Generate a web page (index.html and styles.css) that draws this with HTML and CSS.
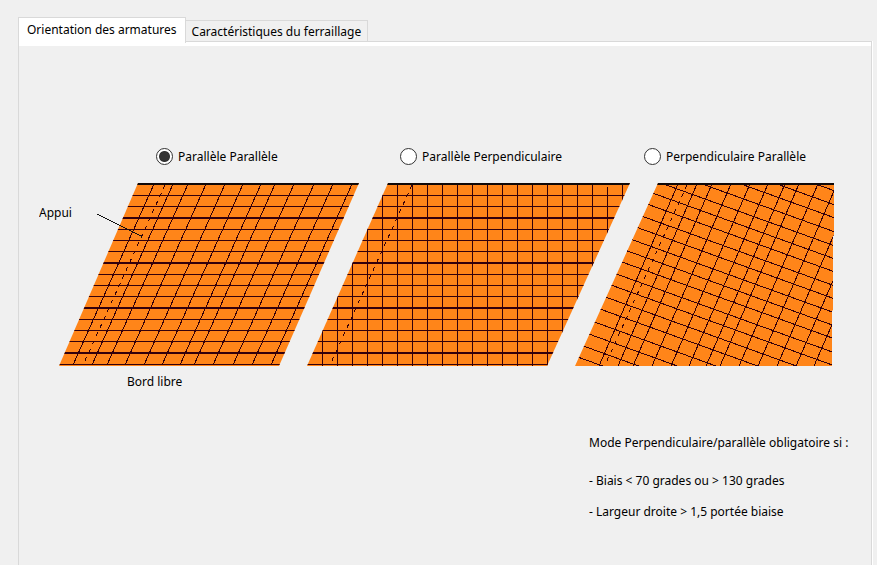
FILE: index.html
```html
<!DOCTYPE html>
<html lang="fr">
<head>
<meta charset="utf-8">
<title>Orientation des armatures</title>
<link rel="stylesheet" href="styles.css">
</head>
<body>
<main class="dialog">
  <div class="tabs" role="tablist">
    <button class="tab tab-active" type="button" role="tab" aria-selected="true">Orientation des armatures</button>
    <button class="tab" type="button" role="tab" aria-selected="false">Caractéristiques du ferraillage</button>
  </div>
  <section class="panel" role="tabpanel">
    <div class="modes">
      <label class="mode"><input type="radio" name="mode" checked>Parallèle Parallèle</label>
      <label class="mode"><input type="radio" name="mode">Parallèle Perpendiculaire</label>
      <label class="mode"><input type="radio" name="mode">Perpendiculaire Parallèle</label>
    </div>
    <svg class="slabs" width="796" height="210" viewBox="0 0 796 210">
      <defs>
        <clipPath id="slab1"><path d="M99 0H320L240 183H20Z"/></clipPath>
        <clipPath id="slab2"><path d="M349 0H591L508 183H268Z"/></clipPath>
        <clipPath id="slab3"><path d="M619 0H795V52L794 53V127L793 128V183H536Z"/></clipPath>
        <g id="rows">
          <path class="bar" d="M0 12.500H600M0 23.500H600M0 46.500H600M0 57.500H600M0 68.500H600M0 91.500H600M0 102.500H600M0 113.500H600M0 136.500H600M0 147.500H600M0 158.500H600M0 181.500H600"/>
          <path class="bar bar-thick" d="M0 35H600M0 80H600M0 125H600M0 170H600"/>
        </g>
      </defs>

      <g clip-path="url(#slab1)">
        <rect class="concrete" width="330" height="183"/>
        <use href="#rows"/>
        <path class="bar" d="M115 1l-81 181M134 1l-81 181M149 1l-81 181M167 1l-81 181M186 1l-81 181M204 1l-81 181M222 1l-81 181M236 1l-81 181M255 1l-81 181M275 1l-81 181M294 1l-81 181M313 1l-81 181"/>
        <path class="support" d="M126 2L44 182"/>
        <path class="edge" d="M90 1H330"/>
      </g>

      <g clip-path="url(#slab2)">
        <rect class="concrete" x="260" width="340" height="183"/>
        <use href="#rows"/>
        <path class="bar" d="M283.500 2V183M298.500 2V183M313.500 2V183M328.500 2V183M343.500 2V183M358.500 2V183M373.500 2V183M388.500 2V183M403.500 2V183M418.500 2V183M433.500 2V183M448.500 2V183M463.500 2V183M478.500 2V183M493.500 2V183M508.500 2V183M523.500 2V183M538.500 2V183M553.500 2V183M568.500 4V183M583.500 2V183"/>
        <path class="support" d="M373 2L291 182"/>
        <path class="edge" d="M340 1H600"/>
      </g>

      <g clip-path="url(#slab3)">
        <rect class="concrete" x="530" width="266" height="183"/>
        <path class="bar" d="M639 1l-79 182M658 1l-79 182M673 1l-79 182M692 1l-79 182M711 1l-79 182M729 1l-79 182M746 1l-79 182M760 1l-79 182M779 1l-79 182M798 1l-79 182M817 1l-79 182M836 1l-79 182M854 1l-79 182"/>
        <path class="bar" d="M536 -86l260 94M536 -72l260 94M536 -59l260 94M536 -45l260 94M536 -31l260 94M536 -18l260 94M536 -5l260 94M536 9l260 94M536 22l260 94M536 36l260 94M536 49l260 94M536 62l260 94M536 76l260 94M536 89l260 94M536 103l260 94M536 117l260 94M536 132l260 94M536 146l260 94M536 160l260 94M536 173l260 94"/>
        <path class="support" d="M648 2L566 182"/>
        <path class="edge" d="M610 1H796"/>
      </g>

      <path class="leader" d="M58 31L102 53V55"/>
      <text x="0" y="34">Appui</text>
      <text x="88" y="203">Bord libre</text>
    </svg>
    <div class="notes">
      <p>Mode Perpendiculaire/parallèle obligatoire si :</p>
      <ul>
        <li>- Biais &lt; 70 grades ou &gt; 130 grades</li>
        <li>- Largeur droite &gt; 1,5 portée biaise</li>
      </ul>
    </div>
  </section>
</main>
</body>
</html>
```
FILE: styles.css
```css
* { box-sizing: border-box; }

body {
  margin: 0;
  background: #f0f0f0;
  color: #000;
  font: 12px/16px "Noto Sans", "Open Sans", sans-serif;
}

.dialog {
  display: flex;
  flex-direction: column;
  min-height: 100vh;
  padding: 17px 5px 0 18px;
}

.tabs {
  display: flex;
  align-items: flex-end;
  height: 24px;
}

.tab {
  height: 21px;
  padding: 1px 6px 0;
  border: 1px solid #d9d9d9;
  border-width: 1px 1px 0 0;
  background: #f0f0f0;
  color: inherit;
  font: inherit;
  white-space: nowrap;
}

.tab-active {
  z-index: 1;
  height: 26px;
  margin-bottom: -2px;
  padding: 0 8px 1px;
  border-left-width: 1px;
  background: #fff;
}

.panel {
  display: flex;
  flex: 1;
  flex-direction: column;
  align-items: flex-start;
  padding: 102px 20px 20px;
  border: 1px solid #d9d9d9;
  border-bottom: 0;
  box-shadow: inset 0 4px #fff, 1px 0 #fff;
}

.modes {
  display: grid;
  grid-template-columns: 244px 244px auto;
  margin-left: 117px;
}

.mode {
  display: flex;
  align-items: center;
  gap: 5px;
  height: 25px;
  white-space: nowrap;
}

.mode input {
  appearance: none;
  width: 17px;
  height: 17px;
  margin: 0;
  border: 1px solid #333;
  border-radius: 50%;
  background: #fff;
}

.mode input:checked {
  background: radial-gradient(circle, #333 5px, #fff 6px);
}

.slabs {
  flex: none;
  margin-top: 14px;
  fill: #000;
  shape-rendering: crispEdges;
}

.concrete { fill: #ff8519; }

.bar {
  fill: none;
  stroke: #34000c;
  stroke-width: 1px;
}

.bar-thick { stroke-width: 2px; }

.support {
  fill: none;
  stroke: #34000c;
  stroke-dasharray: 4 5;
}

.edge {
  stroke: #100808;
  stroke-width: 2px;
}

.leader {
  fill: none;
  stroke: #111;
}

.notes {
  align-self: flex-end;
  min-width: 262px;
  margin-top: 42px;
}

.notes p,
.notes ul {
  margin: 0;
  padding: 0;
  list-style: none;
}

.notes ul {
  display: grid;
  gap: 15px;
  margin-top: 22px;
}
```
